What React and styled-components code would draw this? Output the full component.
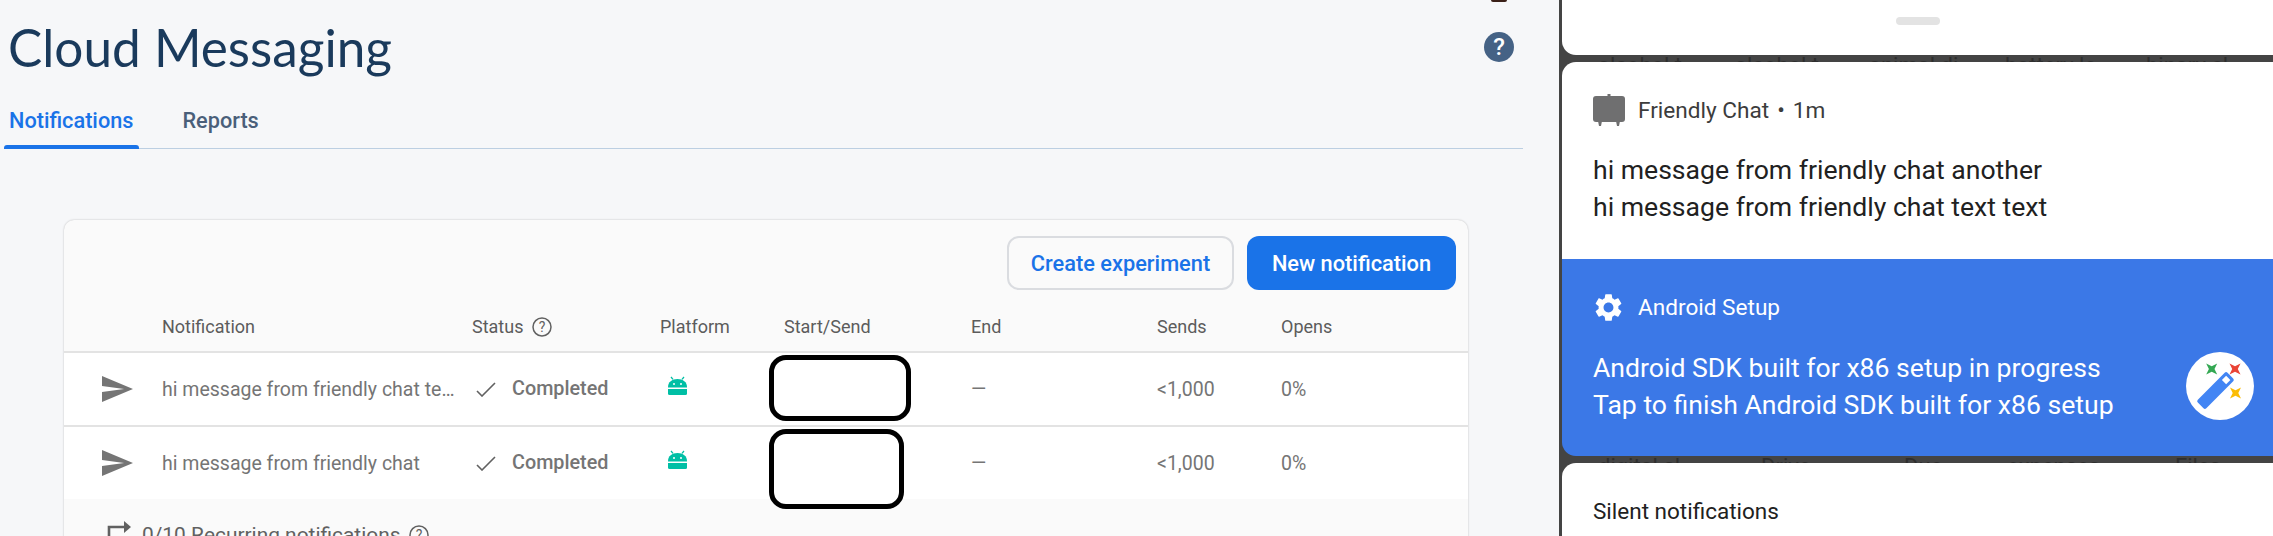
import React from "react";
import styled, { createGlobalStyle } from "styled-components";
import { MdSettings } from "react-icons/md";

const GlobalStyle = createGlobalStyle`
	html, body {
		margin: 0;
		padding: 0;
		height: 536px;
		overflow: hidden;
		background: #f6f7f9;
		font-family: "Roboto", "Liberation Sans", sans-serif;
	}
	* {
		box-sizing: border-box;
	}
`;

const Page = styled.div`
	display: flex;
	width: 2273px;
	height: 536px;
	overflow: hidden;
`;

const Console = styled.main`
	width: 1559px;
	flex-shrink: 0;
	height: 536px;
	overflow: hidden;
`;

const TopBar = styled.div`
	display: flex;
	justify-content: flex-end;
	height: 2px;
	padding-right: 52px;
`;

const Avatar = styled.div`
	width: 16px;
	height: 2px;
	border-radius: 0 0 8px 8px;
	background: #3a2018;
`;

const TitleRow = styled.div`
	display: flex;
	align-items: center;
	justify-content: space-between;
	height: 90px;
	padding: 0 45px 0 8px;
`;

const Title = styled.h1`
	margin: 0;
	font-family: "Lato", sans-serif;
	font-size: 51.3px;
	font-weight: 400;
	color: #1a3a5c;
`;

const HelpBadge = styled.div`
	display: flex;
	align-items: center;
	justify-content: center;
	width: 30px;
	height: 30px;
	border-radius: 50%;
	background: #456285;
	color: #fff;
	font-size: 24px;
	font-weight: 500;
`;

const Tabs = styled.nav`
	display: flex;
	height: 57px;
	margin: 0 36px 0 4px;
	border-bottom: 1px solid #bccfe2;
`;

const Tab = styled.div`
	position: relative;
	display: flex;
	align-items: center;
	height: 57px;
	padding: 3px 6px 4px 5px;
	margin-right: ${(p) => (p.$active ? "38px" : "0")};
	font-size: 21.7px;
	font-weight: 500;
	color: ${(p) => (p.$active ? "#1a73e8" : "#4a5f7a")};
	&::after {
		content: "";
		display: ${(p) => (p.$active ? "block" : "none")};
		position: absolute;
		left: 0;
		right: 0;
		bottom: 0;
		height: 4px;
		background: #1a73e8;
		border-radius: 3px 3px 0 0;
	}
`;

const Card = styled.section`
	position: relative;
	width: 1404px;
	height: 400px;
	margin: 71px 0 0 64px;
	background: #fafafa;
	border-radius: 10px 10px 0 0;
	box-shadow: 0 0 2px rgba(0, 0, 0, 0.25);
`;

const Toolbar = styled.div`
	display: flex;
	justify-content: flex-end;
	gap: 13px;
	padding: 16px 12px 0 0;
`;

const Button = styled.button`
	height: 54px;
	width: ${(p) => p.$width}px;
	border-radius: 12px;
	font-family: inherit;
	font-size: 21.8px;
	font-weight: 500;
	background: ${(p) => (p.$primary ? "#1a73e8" : "#fafafa")};
	color: ${(p) => (p.$primary ? "#fff" : "#1a73e8")};
	border: ${(p) => (p.$primary ? "none" : "2px solid #dadce0")};
`;

const columns = "98px 310px 188px 124px 187px 186px 124px 1fr";

const HeaderRow = styled.div`
	display: grid;
	grid-template-columns: ${columns};
	align-items: center;
	height: 63px;
	padding-top: 12px;
	border-bottom: 2px solid #e3e3e3;
	font-size: 18px;
	color: #5c5c5c;
`;

const HeaderCell = styled.div`
	display: flex;
	align-items: center;
	gap: 9px;
`;

const Row = styled.div`
	display: grid;
	grid-template-columns: ${columns};
	align-items: center;
	height: ${(p) => (p.$last ? "72px" : "74px")};
	background: #fff;
	border-bottom: ${(p) => (p.$last ? "none" : "2px solid #e3e3e3")};
	font-size: 19.5px;
	color: #757575;
`;

const SendCell = styled.div`
	display: flex;
	padding-left: 38px;
`;

const Message = styled.div`
	width: 298px;
	white-space: nowrap;
	overflow: hidden;
	text-overflow: ellipsis;
`;

const StatusCell = styled.div`
	display: flex;
	align-items: center;
	gap: 16px;
	padding-left: 4px;
	font-size: 19.8px;
	font-weight: 500;
	color: #757575;
`;

const StatusText = styled.span`
	position: relative;
	top: -1px;
`;

const PlatformCell = styled.div`
	display: flex;
	padding: 0 0 7px 8px;
`;

const Redaction = styled.div`
	position: absolute;
	left: 705px;
	top: ${(p) => p.$top}px;
	width: ${(p) => p.$width}px;
	height: ${(p) => p.$height}px;
	background: #fff;
	border: 5px solid #000;
	border-radius: 17px;
`;

const Recurring = styled.div`
	display: flex;
	align-items: center;
	gap: 11px;
	padding: 24px 0 0 43px;
	font-size: 20.9px;
	color: #616161;
`;

const RecurringGlyph = styled.div`
	display: flex;
	align-self: flex-start;
	margin-top: -4px;
`;

const RecurringHelp = styled.div`
	display: flex;
	margin-left: -3px;
`;

const Shade = styled.aside`
	flex: 1;
	height: 536px;
	padding-left: 3px;
	background: #444;
	overflow: hidden;
`;

const Sheet = styled.div`
	background: #fff;
	overflow: hidden;
	height: ${(p) => p.$height}px;
	border-radius: ${(p) => p.$radius || "0"};
`;

const HandleSheet = styled(Sheet)`
	display: flex;
	justify-content: center;
	padding-top: 17px;
`;

const Handle = styled.div`
	width: 44px;
	height: 8px;
	border-radius: 4px;
	background: #e3e3e3;
`;

const Peek = styled.div`
	position: relative;
	height: 7px;
	overflow: hidden;
`;

const PeekLabel = styled.span`
	position: absolute;
	left: ${(p) => p.$left}px;
	top: -1px;
	font-size: 22px;
	line-height: 24px;
	color: #2e2e2e;
	white-space: nowrap;
`;

const NotificationBlock = styled.div`
	height: ${(p) => p.$height}px;
	padding: ${(p) => p.$top}px 0 0 31px;
	background: ${(p) => (p.$blue ? "#3b78e7" : "#fff")};
	color: ${(p) => (p.$blue ? "#fff" : "#212121")};
	border-radius: ${(p) => p.$radius || "0"};
`;

const AppLine = styled.div`
	display: flex;
	align-items: center;
	gap: 13px;
	height: 32px;
	font-size: 22.6px;
	color: ${(p) => (p.$blue ? "#fff" : "#3c3c3c")};
`;

const IconSlot = styled.div`
	display: flex;
	width: 32px;
`;

const AppDot = styled.span`
	margin: 0 8px;
`;

const BodyRow = styled.div`
	display: flex;
	align-items: center;
	justify-content: space-between;
	padding-right: 19px;
	margin-top: ${(p) => p.$gap}px;
`;

const BodyText = styled.div`
	font-size: 26.6px;
	line-height: 37px;
`;

const SilentLabel = styled.div`
	padding: 35px 0 0 31px;
	font-size: 22.5px;
	color: #212121;
`;

const peekTop = [
	["alcohol t", 36],
	["alcohol t", 173],
	["animal di", 307],
	["battery lo", 443],
	["binary cl", 584],
];

const peekBottom = [
	["digital sl", 36],
	["Drive", 199],
	["Duo", 342],
	["expenses", 445],
	["Files", 613],
];

const SendIcon = () => (
	<svg width="31" height="26" viewBox="2 3 21 18" preserveAspectRatio="none">
		<path d="M2.01 21 23 12 2.01 3 2 10l15 2-15 2z" fill="#757575" />
	</svg>
);

const CheckIcon = () => (
	<svg width="20" height="15" viewBox="0 0 20 15">
		<path d="M1 9l5 5L19 1" fill="none" stroke="#616161" strokeWidth="1.6" />
	</svg>
);

const AndroidIcon = () => (
	<svg width="19" height="19" viewBox="0 0 19 19">
		<path d="M3 1l2 2.4M16 1l-2 2.4" stroke="#00bfa5" strokeWidth="1.3" />
		<path d="M0 11C0 6 4 3 9.5 3S19 6 19 11v.5H0z" fill="#00bfa5" />
		<circle cx="6" cy="8" r="1" fill="#fff" />
		<circle cx="13" cy="8" r="1" fill="#fff" />
		<path d="M0 13h19v4.5a1.5 1.5 0 0 1-1.5 1.5h-16A1.5 1.5 0 0 1 0 17.5z" fill="#00bfa5" />
	</svg>
);

const CircleHelp = () => (
	<svg width="20" height="20" viewBox="0 0 20 20">
		<circle cx="10" cy="10" r="9" fill="none" stroke="#616161" strokeWidth="1.5" />
		<text x="10" y="15" textAnchor="middle" fontSize="14" fontFamily="Roboto" fill="#616161">
			?
		</text>
	</svg>
);

const RecurringIcon = () => (
	<svg width="24" height="22" viewBox="0 0 24 22">
		<path d="M2 22V8h17" fill="none" stroke="#616161" strokeWidth="2.6" />
		<path d="M17 2l7 6-7 6z" fill="#616161" />
	</svg>
);

const FriendlyIcon = () => (
	<svg width="32" height="32" viewBox="0 0 32 32">
		<rect x="14.5" y="0" width="3" height="4" fill="#6f6f70" />
		<rect x="0" y="2" width="32" height="26" rx="3" fill="#6f6f70" />
		<path d="M5 27h4l-1 5H6zM23 27h4l-1 5h-2z" fill="#6f6f70" />
	</svg>
);

const Sparkle = ({ x, y, color }) => (
	<path
		transform={`translate(${x} ${y})`}
		d="M-5.5-5.5L0-2.8 5.5-5.5 2.8 0 5.5 5.5 0 2.8-5.5 5.5-2.8 0z"
		fill={color}
	/>
);

const WandBadge = () => (
	<svg width="68" height="68" viewBox="0 0 68 68">
		<circle cx="34" cy="34" r="34" fill="#fff" />
		<Sparkle x={25.7} y={17} color="#34a853" />
		<Sparkle x={49} y={17} color="#ea4335" />
		<Sparkle x={49.5} y={41} color="#fbbc04" />
		<g transform="translate(29.5 38.5) rotate(45)">
			<rect x="-6" y="-21" width="12" height="42" rx="2" fill="#4285f4" />
			<rect x="-3" y="-18" width="6" height="6" fill="#fff" />
		</g>
	</svg>
);

const App = () => {
	return (
		<Page>
			<GlobalStyle />
			<Console>
				<TopBar>
					<Avatar />
				</TopBar>
				<TitleRow>
					<Title>Cloud Messaging</Title>
					<HelpBadge>?</HelpBadge>
				</TitleRow>
				<Tabs>
					<Tab $active>Notifications</Tab>
					<Tab>Reports</Tab>
				</Tabs>
				<Card>
					<Toolbar>
						<Button $width={227}>Create experiment</Button>
						<Button $primary $width={209}>
							New notification
						</Button>
					</Toolbar>
					<HeaderRow>
						<div />
						<HeaderCell>Notification</HeaderCell>
						<HeaderCell>
							Status <CircleHelp />
						</HeaderCell>
						<HeaderCell>Platform</HeaderCell>
						<HeaderCell>Start/Send</HeaderCell>
						<HeaderCell>End</HeaderCell>
						<HeaderCell>Sends</HeaderCell>
						<HeaderCell>Opens</HeaderCell>
					</HeaderRow>
					<Row>
						<SendCell>
							<SendIcon />
						</SendCell>
						<Message>hi message from friendly chat text text</Message>
						<StatusCell>
							<CheckIcon />
							<StatusText>Completed</StatusText>
						</StatusCell>
						<PlatformCell>
							<AndroidIcon />
						</PlatformCell>
						<div />
						<div>—</div>
						<div>&lt;1,000</div>
						<div>0%</div>
					</Row>
					<Row $last>
						<SendCell>
							<SendIcon />
						</SendCell>
						<Message>hi message from friendly chat</Message>
						<StatusCell>
							<CheckIcon />
							<StatusText>Completed</StatusText>
						</StatusCell>
						<PlatformCell>
							<AndroidIcon />
						</PlatformCell>
						<div />
						<div>—</div>
						<div>&lt;1,000</div>
						<div>0%</div>
					</Row>
					<Recurring>
						<RecurringGlyph>
							<RecurringIcon />
						</RecurringGlyph>
						<span>0/10 Recurring notifications</span>
						<RecurringHelp>
							<CircleHelp />
						</RecurringHelp>
					</Recurring>
					<Redaction $top={135} $width={142} $height={66} />
					<Redaction $top={209} $width={135} $height={80} />
				</Card>
			</Console>
			<Shade>
				<HandleSheet $height={55} $radius="0 0 0 14px">
					<Handle />
				</HandleSheet>
				<Peek>
					{peekTop.map(([label, left]) => (
						<PeekLabel key={left} $left={left}>
							{label}
						</PeekLabel>
					))}
				</Peek>
				<NotificationBlock $height={197} $top={32} $radius="14px 0 0 0">
					<AppLine>
						<IconSlot>
							<FriendlyIcon />
						</IconSlot>
						<span>
							Friendly Chat<AppDot>•</AppDot>1m
						</span>
					</AppLine>
					<BodyRow $gap={25}>
						<BodyText>
							hi message from friendly chat another
							<br />
							hi message from friendly chat text text
						</BodyText>
					</BodyRow>
				</NotificationBlock>
				<NotificationBlock $blue $height={197} $top={32} $radius="0 0 0 14px">
					<AppLine $blue>
						<IconSlot>
							<MdSettings size={35} style={{ margin: "0 0 0 -1px" }} />
						</IconSlot>
						Android Setup
					</AppLine>
					<BodyRow $gap={26}>
						<BodyText>
							Android SDK built for x86 setup in progress
							<br />
							Tap to finish Android SDK built for x86 setup
						</BodyText>
						<WandBadge />
					</BodyRow>
				</NotificationBlock>
				<Peek>
					{peekBottom.map(([label, left]) => (
						<PeekLabel key={left} $left={left}>
							{label}
						</PeekLabel>
					))}
				</Peek>
				<Sheet $height={80} $radius="14px 0 0 0">
					<SilentLabel>Silent notifications</SilentLabel>
				</Sheet>
			</Shade>
		</Page>
	);
};

export default App;
